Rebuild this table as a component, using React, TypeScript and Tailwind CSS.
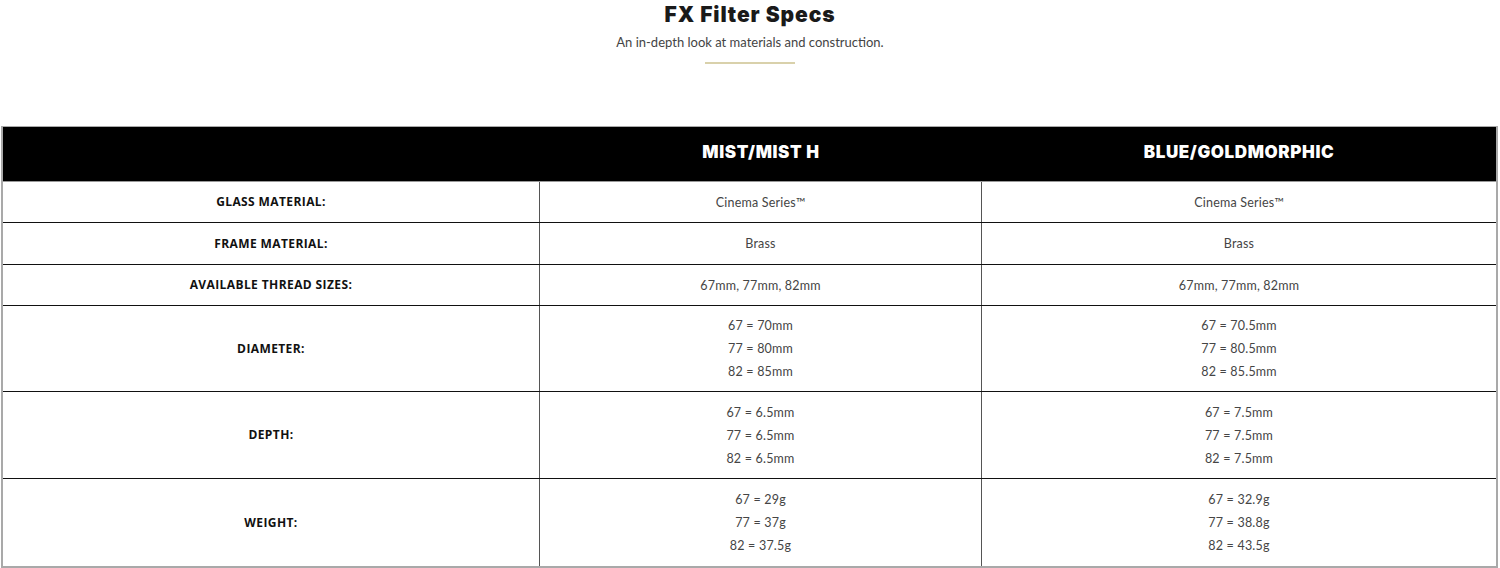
const columns = ["MIST/MIST H", "BLUE/GOLDMORPHIC"];

type Row = { label: string; h: string; a: string[]; b: string[] };

const rows: Row[] = [
  { label: "GLASS MATERIAL:", h: "h-[41px]", a: ["Cinema Series™"], b: ["Cinema Series™"] },
  { label: "FRAME MATERIAL:", h: "h-[42px]", a: ["Brass"], b: ["Brass"] },
  { label: "AVAILABLE THREAD SIZES:", h: "h-[41px]", a: ["67mm, 77mm, 82mm"], b: ["67mm, 77mm, 82mm"] },
  {
    label: "DIAMETER:",
    h: "h-[86px]",
    a: ["67 = 70mm", "77 = 80mm", "82 = 85mm"],
    b: ["67 = 70.5mm", "77 = 80.5mm", "82 = 85.5mm"],
  },
  {
    label: "DEPTH:",
    h: "h-[87px]",
    a: ["67 = 6.5mm", "77 = 6.5mm", "82 = 6.5mm"],
    b: ["67 = 7.5mm", "77 = 7.5mm", "82 = 7.5mm"],
  },
  {
    label: "WEIGHT:",
    h: "h-[87px]",
    a: ["67 = 29g", "77 = 37g", "82 = 37.5g"],
    b: ["67 = 32.9g", "77 = 38.8g", "82 = 43.5g"],
  },
];

function Values({ lines, last }: { lines: string[]; last?: boolean }) {
  return (
    <div
      className={`flex flex-col items-center justify-center gap-[6px] font-['Lato',sans-serif] text-[12.5px] leading-[17px] tracking-[0.2px] text-[#454545] ${
        last ? "" : "border-r border-[#555]"
      }`}
    >
      {lines.map((l) => (
        <span key={l}>{l}</span>
      ))}
    </div>
  );
}

export default function App() {
  return (
    <div className="h-[568px] w-[1500px] overflow-hidden bg-white">
      <div className="flex h-[126px] flex-col items-center">
        <h2 className="mt-[3px] font-['Inter',sans-serif] text-[21px] font-black leading-[24px] tracking-[0.9px] text-[#1a1a1a]">
          FX Filter Specs
        </h2>
        <p className="mt-[7px] font-['Lato',sans-serif] text-[13px] leading-[16px] text-[#444]">
          An in-depth look at materials and construction.
        </p>
        <div className="mt-[12px] h-[2px] w-[90px] bg-[#d9d1ab]" />
      </div>

      <div className="ml-px mr-[2px] border-x-2 border-t border-b-2 border-[#a9a9a9]">
        <div className="grid h-[55px] grid-cols-[537px_442px_1fr] border-b border-[#999] bg-black">
          <div />
          {columns.map((c) => (
            <div
              key={c}
              className="flex items-center justify-center pb-[3px] font-['Inter',sans-serif] text-[17px] font-black tracking-[0.6px] text-white"
            >
              {c}
            </div>
          ))}
        </div>
        {rows.map((r, i) => (
          <div
            key={r.label}
            className={`grid grid-cols-[537px_442px_1fr] ${r.h} ${
              i < rows.length - 1 ? "border-b border-[#111]" : ""
            }`}
          >
            <div className="flex items-center justify-center border-r border-[#555] font-['Open_Sans',sans-serif] text-[12px] font-bold tracking-[0.4px] text-[#111]">
              {r.label}
            </div>
            <Values lines={r.a} />
            <Values lines={r.b} last />
          </div>
        ))}
      </div>
    </div>
  );
}
